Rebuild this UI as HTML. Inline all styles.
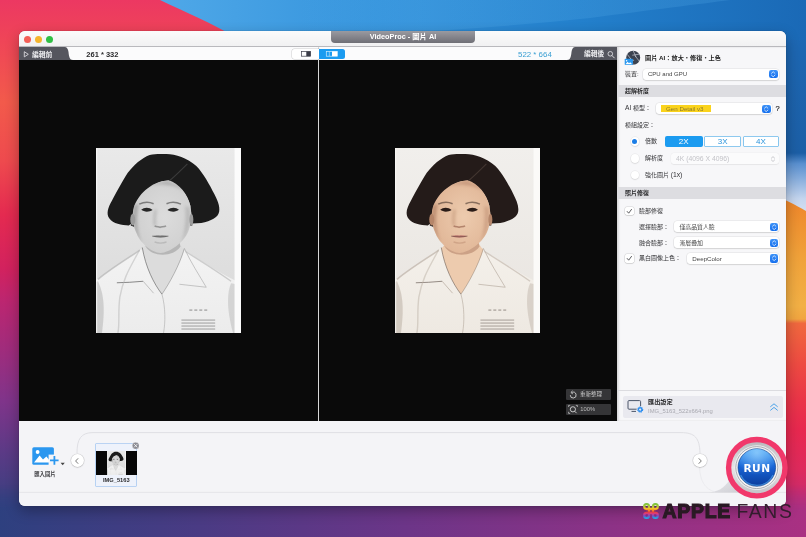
<!DOCTYPE html>
<html lang="zh-Hant">
<head>
<meta charset="utf-8">
<title>VideoProc - 圖片 AI</title>
<style>
*{box-sizing:border-box;margin:0;padding:0}
html,body{width:806px;height:537px;overflow:hidden;background:#222}
body{position:relative;font-family:"Liberation Sans","Noto Sans CJK TC",sans-serif;font-size:7px;color:#222;-webkit-font-smoothing:antialiased}
.abs{position:absolute}
#wall{position:absolute;left:0;top:0;width:806px;height:537px}
#win{will-change:transform;position:absolute;left:19px;top:31px;width:767px;height:475px;border-radius:6px;background:#ececee;box-shadow:0 5px 14px rgba(0,0,0,.3),0 0 1px rgba(0,0,0,.45);overflow:hidden}
#titlebar{position:absolute;left:0;top:0;width:767px;height:16px;background:linear-gradient(#fbfbfb,#f1f1f2);border-bottom:1px solid #b9b9bd}
.tl{position:absolute;top:4.6px;width:7px;height:7px;border-radius:50%}
#pill{position:absolute;left:312px;top:0;width:144px;height:12px;border-radius:0 0 4px 4px;background:linear-gradient(#9a9aa0,#6f6f76);color:#fff;font-weight:bold;font-size:7.3px;line-height:12px;text-align:center;letter-spacing:0}
#tabrow{position:absolute;left:0;top:16px;width:598px;height:13px;background:#fbfbfc}
.tab{position:absolute;top:0;height:13px;background:#55565e;color:#f1f1f3;font-weight:bold;font-size:7px;line-height:13px;white-space:nowrap}
#canvas{position:absolute;left:0;top:29px;width:598px;height:361px;background:#0a0a0a}
#divider{position:absolute;left:299px;top:16px;width:1px;height:374px;background:#d8d8d8}
#panel{position:absolute;left:598px;top:16px;width:169px;height:374px;background:#f7f7f9;box-shadow:inset 1.5px 0 2px rgba(0,0,0,.14)}
#bottom{position:absolute;left:0;top:390px;width:767px;height:85px;background:#f4f4f7}
.t{position:absolute;white-space:nowrap;line-height:1}

#ui{position:absolute;left:0;top:0;width:806px;height:537px;overflow:hidden;will-change:transform}
#ui .t{font-size:6px;color:#333336}
.b{font-weight:bold}
.dd{position:absolute;background:#fff;border-radius:3px;box-shadow:0 0 0 .5px rgba(0,0,0,.07),0 .5px 1.3px rgba(0,0,0,.2)}
.dd .lbl{position:absolute;left:5px;top:0;height:100%;display:flex;align-items:center;font-size:6.2px;color:#444;white-space:nowrap}
.st{position:absolute;right:1.3px;top:1.4px;bottom:1.4px;width:8.4px;border-radius:2.2px;background:linear-gradient(#3d92f7,#1670ee)}
.st svg{position:absolute;left:0;top:0;width:100%;height:100%}
.hdr{position:absolute;left:617px;width:169px;height:12px;background:#dddde1;font-size:6px;font-weight:bold;color:#2a2a2c;line-height:12px;padding-left:8px}
.radio{position:absolute;width:8.6px;height:8.6px;border-radius:50%;background:#fff;box-shadow:0 0 0 .5px rgba(0,0,0,.06),0 .5px 1.4px rgba(0,0,0,.16)}
.cb{position:absolute;width:8.6px;height:8.6px;border-radius:1.8px;background:#fff;box-shadow:0 0 0 .5px rgba(0,0,0,.14),0 .5px 1.2px rgba(0,0,0,.15)}
.cb svg{position:absolute;left:0;top:0;width:100%;height:100%}
.xb{position:absolute;top:136px;height:11px;border-radius:2px;font-size:8px;line-height:11px;text-align:center}
</style>
</head>
<body>
<svg id="wall" viewBox="0 0 806 537">
  <defs>
    <linearGradient id="gL" x1="0" y1="0" x2="0" y2="1">
      <stop offset="0" stop-color="#ec3862"/>
      <stop offset="0.07" stop-color="#ef4458"/>
      <stop offset="0.19" stop-color="#f25a4b"/>
      <stop offset="0.30" stop-color="#ee4a4e"/>
      <stop offset="0.40" stop-color="#e42a50"/>
      <stop offset="0.50" stop-color="#d2225e"/>
      <stop offset="0.56" stop-color="#bc2670"/>
      <stop offset="0.65" stop-color="#a02c7c"/>
      <stop offset="0.745" stop-color="#80348a"/>
      <stop offset="0.84" stop-color="#5c3a86"/>
      <stop offset="0.93" stop-color="#3c3f80"/>
      <stop offset="1" stop-color="#2a447e"/>
    </linearGradient>
    <linearGradient id="gT" x1="0" y1="0" x2="1" y2="0">
      <stop offset="0" stop-color="#ee3862"/>
      <stop offset="1" stop-color="#ee3862"/>
    </linearGradient>
    <linearGradient id="gB" gradientUnits="userSpaceOnUse" x1="160" y1="0" x2="806" y2="0">
      <stop offset="0" stop-color="#4fa8e8"/>
      <stop offset="0.35" stop-color="#3493dc"/>
      <stop offset="0.65" stop-color="#2380cc"/>
      <stop offset="1" stop-color="#1a69b6"/>
    </linearGradient>
    <linearGradient id="gR" gradientUnits="userSpaceOnUse" x1="0" y1="0" x2="0" y2="537">
      <stop offset="0" stop-color="#1e6dbb"/>
      <stop offset="0.1" stop-color="#1d66b1"/>
      <stop offset="0.285" stop-color="#1c5fa6"/>
      <stop offset="0.305" stop-color="#5a90d0"/>
      <stop offset="0.37" stop-color="#c4d5ee"/>
      <stop offset="0.4" stop-color="#d6e0f2"/>
    </linearGradient>
    <linearGradient id="gR2" gradientUnits="userSpaceOnUse" x1="0" y1="0" x2="0" y2="537">
      <stop offset="0.37" stop-color="#ee862a"/>
      <stop offset="0.48" stop-color="#f0a23a"/>
      <stop offset="0.57" stop-color="#f2b045"/>
      <stop offset="0.594" stop-color="#f1a540"/>
      <stop offset="0.602" stop-color="#f0683e"/>
      <stop offset="0.68" stop-color="#ee4a42"/>
      <stop offset="0.745" stop-color="#ea3548"/>
      <stop offset="0.8" stop-color="#e8284f"/>
      <stop offset="0.875" stop-color="#de2a5d"/>
      <stop offset="0.94" stop-color="#c42c73"/>
      <stop offset="1" stop-color="#a03488"/>
    </linearGradient>
    <linearGradient id="gBot" gradientUnits="userSpaceOnUse" x1="0" y1="560" x2="806" y2="470">
      <stop offset="0" stop-color="#2d407f"/>
      <stop offset="0.25" stop-color="#4a3b84"/>
      <stop offset="0.5" stop-color="#6c3588"/>
      <stop offset="0.75" stop-color="#8c3286"/>
      <stop offset="1" stop-color="#aa3082"/>
    </linearGradient>
    <linearGradient id="gBotFade" x1="0" y1="0" x2="0" y2="1">
      <stop offset="0" stop-color="#fff" stop-opacity="0"/>
      <stop offset="1" stop-color="#fff" stop-opacity="1"/>
    </linearGradient>
    <linearGradient id="gWave" gradientUnits="userSpaceOnUse" x1="300" y1="0" x2="420" y2="0"><stop offset="0" stop-color="#58aeea" stop-opacity="0"/><stop offset="1" stop-color="#58aeea" stop-opacity=".22"/></linearGradient>
    <mask id="mBot"><rect x="0" y="485" width="806" height="25" fill="url(#gBotFade)"/><rect x="0" y="509" width="806" height="30" fill="#fff"/></mask>
  </defs>
  <rect width="806" height="537" fill="url(#gL)"/>
  <rect x="770" y="0" width="36" height="537" fill="url(#gR)"/>
  <path d="M770 194 C782 198 796 205 806 211 L806 537 L770 537 Z" fill="url(#gR2)"/>
  <rect x="0" y="470" width="806" height="67" fill="url(#gBot)" mask="url(#mBot)"/>
  <path d="M160 0 C185 12 210 22 240 40 L806 40 L806 0 Z" fill="url(#gB)"/>
  <path d="M300 0 L300 40 C400 32 500 28 590 18 C650 10 700 4 730 0 Z" fill="url(#gWave)"/>
</svg>
<div id="win">
  <div id="titlebar">
    <div class="tl" style="left:4.6px;background:#f35e56"></div>
    <div class="tl" style="left:15.8px;background:#f5b52d"></div>
    <div class="tl" style="left:27px;background:#2fbf44"></div>
    <div id="pill">VideoProc - 圖片 AI</div>
  </div>
  <div id="tabrow"></div>
  <div id="canvas"></div>
  <div id="divider"></div>
  <div id="panel"></div>
  <div id="bottom"></div>
</div>

<!--PHOTODEFS--><svg width="0" height="0" style="position:absolute">
<symbol id="bwphoto" viewBox="0 0 146 186" preserveAspectRatio="none">
  <defs>
    <linearGradient id="bwphotobg" x1="0" y1="0" x2="0" y2="1"><stop offset="0" stop-color="#e9e9e9"/><stop offset="1" stop-color="#d8d8d8"/></linearGradient>
    <radialGradient id="bwphotoface" cx=".55" cy=".5" r=".7"><stop offset="0" stop-color="#dcdcdc"/><stop offset=".75" stop-color="#d0d0d0"/><stop offset="1" stop-color="#9c9c9c"/></radialGradient>
    <linearGradient id="bwphotoshirt" x1="0" y1="0" x2="0" y2="1"><stop offset="0" stop-color="#f3f3f3"/><stop offset="1" stop-color="#ececec"/></linearGradient>
    <filter id="bwphotobl" x="-5%" y="-5%" width="110%" height="110%" color-interpolation-filters="sRGB"><feGaussianBlur stdDeviation="0.7"/></filter>
    <filter id="bwphotobl2" x="-20%" y="-20%" width="140%" height="140%" color-interpolation-filters="sRGB"><feGaussianBlur stdDeviation="1.6"/></filter>
    <clipPath id="bwphotocp"><rect width="146" height="186"/></clipPath>
    <clipPath id="bwphotofc"><path d="M73 32.500 C84 36 92 46 95 58 C97 68 96 77 92.500 85 C88 95 74 105.500 65 105.500 C56 105.500 44 95 40.500 85 C37 77 36 68 38 60 C42 48 54 34 73 32.500 Z"/></clipPath>
  </defs>
  <g clip-path="url(#bwphotocp)">
  <rect width="146" height="186" fill="url(#bwphotobg)"/>
  <g filter="url(#bwphotobl)">
    <!-- shirt -->
    <path d="M-4 186 L-4 136 C6 128 22 118 44 102 L90 103 C110 116 128 128 150 138 L150 186 Z" fill="url(#bwphotoshirt)"/>
    <!-- shirt shading -->
    <path d="M2 134 C10 150 8 170 6 186 L-2 186 L-2 136 Z" fill="#b4b4b4" opacity=".55"/>
    <path d="M136 136 C130 150 134 172 138 186 L146 186 L146 138 Z" fill="#b4b4b4" opacity=".45"/>
    <path d="M44 103 C30 112 14 122 2 132" fill="none" stroke="#b4b4b4" stroke-width="1.6" opacity=".7"/>
    <path d="M90 104 C106 114 122 124 136 134" fill="none" stroke="#b4b4b4" stroke-width="1.4" opacity=".6"/>
    <!-- neck + chest skin -->
    <path d="M52 90 C51 96 49 99 46.600 101 C50 120 58 136 66.400 147 C74 136 84 118 89 102 C86 100 84 96 83 90 Z" fill="#dcdcdc"/>
    <path d="M50 99 C56 110 78 110 85 99 L83 90 L52 90 Z" fill="#9c9c9c" opacity=".6"/>
    <path d="M46.600 100 C50 120 58 136 66.400 147" fill="none" stroke="#5a5a5a" stroke-width="1" opacity=".6"/>
    <path d="M89 101 C84 118 74 136 66.400 147" fill="none" stroke="#5a5a5a" stroke-width=".8" opacity=".45"/>
    <!-- collar lines -->
    <path d="M21 135.500 L34 135 L47.500 134" fill="none" stroke="#5a5a5a" stroke-width="1" opacity=".7"/>
    <path d="M47.500 134 L58 146" fill="none" stroke="#b4b4b4" stroke-width="1" opacity=".8"/>
    <path d="M89 101 C96 116 104 128 111 140 L84 137" fill="none" stroke="#b4b4b4" stroke-width="1" opacity=".75"/>
    <path d="M66.400 147 C70 160 70 175 68 186" fill="none" stroke="#b4b4b4" stroke-width="1" opacity=".7"/>
    <path d="M44 102 C36 118 28 128 24 150 C22 165 24 178 22 186" fill="none" stroke="#b4b4b4" stroke-width="1.400" opacity=".5"/>
    <!-- badge -->
    <g stroke="#5a5a5a" stroke-width="1" opacity=".55">
      <path d="M86 173 H120 M86 176 H120 M86 179 H120 M86 182 H120"/>
      <path d="M94 163 H113" stroke-width="2" stroke-dasharray="3 2" opacity=".7"/>
    </g>
    <!-- hair -->
    <path d="M71 6 C80 6 92 10 101 18 C108 25 115 38 119 46 C122 52 125 58 124 64 C123 70 116 73 106 75.500 L97 76 L95 58 C92 46 84 38 73 33 C62 33 52 40 44 50 L38 62 L37 75 L33 78 C26 78 17 76 13.500 71 C10 66 12 60 16 53 C20 46 26 34 32 25 C38 17 46 10 54 7 C60 5.500 66 6 71 6 Z" fill="#1b1b1b"/>
    <path d="M37 60 L35 78 L40 80 Z" fill="#1b1b1b"/>
    <path d="M95 58 L97 78 L92 78 Z" fill="#1b1b1b"/>
    <!-- face -->
    <path d="M73 32.500 C84 36 92 46 95 58 C97 68 96 77 92.500 85 C88 95 74 105.500 65 105.500 C56 105.500 44 95 40.500 85 C37 77 36 68 38 60 C42 48 54 34 73 32.500 Z" fill="url(#bwphotoface)"/>
    <!-- parting highlight -->
    <path d="M74 33 C80 28 86 22 92 16" fill="none" stroke="#5a5a5a" stroke-width="1.200" opacity=".5"/>
    <!-- ears -->
    <ellipse cx="37" cy="72" rx="2.500" ry="6" fill="#9c9c9c"/>
    <ellipse cx="96" cy="72" rx="2" ry="6" fill="#9c9c9c"/>
    <!-- features -->
    <path d="M45.500 62.200 C48.500 59.300 53.500 59.300 57 62.400 C53.500 64.600 48.500 64.600 45.500 62.200 Z" fill="#262626"/>
    <path d="M72 62.400 C75.500 59.300 80.500 59.300 83.500 62.200 C80.500 64.600 75.500 64.600 72 62.400 Z" fill="#262626"/>
    <path d="M43.500 56.500 C48 54.200 54 54.200 58 56" fill="none" stroke="#262626" stroke-width="1.500" opacity=".5"/>
    <path d="M71 56 C75 54.200 81 54.200 85.500 56.500" fill="none" stroke="#262626" stroke-width="1.500" opacity=".5"/>
    <path d="M59 78.200 C61 79.600 63 79 64.500 79.800 C66 79 68.500 79.600 70.500 78.200" fill="none" stroke="#8a8a8a" stroke-width="1.500" opacity=".85"/>
    <path d="M56.500 88.500 C60 87.800 62.500 87.200 64.500 88 C66.500 87.200 69.500 87.800 73 88.500 C69 90.800 61 90.800 56.500 88.500 Z" fill="#8e8e8e"/>
    <path d="M56.500 88.600 C61 89.400 68 89.400 73 88.600" fill="none" stroke="#262626" stroke-width=".700" opacity=".5"/>
    <path d="M59 94.500 C62 96 68 96 71 94.500" fill="none" stroke="#9c9c9c" stroke-width="1.400" opacity=".45"/>
  </g>
  <g clip-path="url(#bwphotofc)">
    <g filter="url(#bwphotobl2)">
      <path d="M38 58 C36 72 38 84 46 96 C41 84 40 70 43 56 Z" fill="#9c9c9c" opacity=".8"/>
      <path d="M94 60 C96 72 94 84 86 96 C90 84 91 70 90 58 Z" fill="#9c9c9c" opacity=".45"/>
      <path d="M60 62 C59 68 58.500 74 59.500 78" fill="none" stroke="#9c9c9c" stroke-width="2.400" opacity=".55"/>
      <path d="M44 40 C54 36 76 34 90 44 L84 38 L72 33 L54 36 Z" fill="#9c9c9c" opacity=".6"/>
    </g>
  </g>
  <rect x="139.500" y="0" width="6.500" height="186" fill="#fbfbfb"/>
  <rect x="0" y="0" width="1.200" height="186" fill="#fbfbfb" opacity=".7"/>
  </g>
</symbol>
<symbol id="clphoto" viewBox="0 0 146 186" preserveAspectRatio="none">
  <defs>
    <linearGradient id="clphotobg" x1="0" y1="0" x2="0" y2="1"><stop offset="0" stop-color="#f1efec"/><stop offset="1" stop-color="#e8e4df"/></linearGradient>
    <radialGradient id="clphotoface" cx=".55" cy=".5" r=".7"><stop offset="0" stop-color="#edcbae"/><stop offset=".75" stop-color="#e1b798"/><stop offset="1" stop-color="#b5866a"/></radialGradient>
    <linearGradient id="clphotoshirt" x1="0" y1="0" x2="0" y2="1"><stop offset="0" stop-color="#f4f0ea"/><stop offset="1" stop-color="#eee9e2"/></linearGradient>
    <filter id="clphotobl" x="-5%" y="-5%" width="110%" height="110%" color-interpolation-filters="sRGB"><feGaussianBlur stdDeviation="0.7"/></filter>
    <filter id="clphotobl2" x="-20%" y="-20%" width="140%" height="140%" color-interpolation-filters="sRGB"><feGaussianBlur stdDeviation="1.6"/></filter>
    <clipPath id="clphotocp"><rect width="146" height="186"/></clipPath>
    <clipPath id="clphotofc"><path d="M73 32.500 C84 36 92 46 95 58 C97 68 96 77 92.500 85 C88 95 74 105.500 65 105.500 C56 105.500 44 95 40.500 85 C37 77 36 68 38 60 C42 48 54 34 73 32.500 Z"/></clipPath>
  </defs>
  <g clip-path="url(#clphotocp)">
  <rect width="146" height="186" fill="url(#clphotobg)"/>
  <g filter="url(#clphotobl)">
    <!-- shirt -->
    <path d="M-4 186 L-4 136 C6 128 22 118 44 102 L90 103 C110 116 128 128 150 138 L150 186 Z" fill="url(#clphotoshirt)"/>
    <!-- shirt shading -->
    <path d="M2 134 C10 150 8 170 6 186 L-2 186 L-2 136 Z" fill="#bcb1a6" opacity=".55"/>
    <path d="M136 136 C130 150 134 172 138 186 L146 186 L146 138 Z" fill="#bcb1a6" opacity=".45"/>
    <path d="M44 103 C30 112 14 122 2 132" fill="none" stroke="#bcb1a6" stroke-width="1.6" opacity=".7"/>
    <path d="M90 104 C106 114 122 124 136 134" fill="none" stroke="#bcb1a6" stroke-width="1.4" opacity=".6"/>
    <!-- neck + chest skin -->
    <path d="M52 90 C51 96 49 99 46.600 101 C50 120 58 136 66.400 147 C74 136 84 118 89 102 C86 100 84 96 83 90 Z" fill="#edcbae"/>
    <path d="M50 99 C56 110 78 110 85 99 L83 90 L52 90 Z" fill="#b5866a" opacity=".6"/>
    <path d="M46.600 100 C50 120 58 136 66.400 147" fill="none" stroke="#6a5f58" stroke-width="1" opacity=".6"/>
    <path d="M89 101 C84 118 74 136 66.400 147" fill="none" stroke="#6a5f58" stroke-width=".8" opacity=".45"/>
    <!-- collar lines -->
    <path d="M21 135.500 L34 135 L47.500 134" fill="none" stroke="#6a5f58" stroke-width="1" opacity=".7"/>
    <path d="M47.500 134 L58 146" fill="none" stroke="#bcb1a6" stroke-width="1" opacity=".8"/>
    <path d="M89 101 C96 116 104 128 111 140 L84 137" fill="none" stroke="#bcb1a6" stroke-width="1" opacity=".75"/>
    <path d="M66.400 147 C70 160 70 175 68 186" fill="none" stroke="#bcb1a6" stroke-width="1" opacity=".7"/>
    <path d="M44 102 C36 118 28 128 24 150 C22 165 24 178 22 186" fill="none" stroke="#bcb1a6" stroke-width="1.400" opacity=".5"/>
    <!-- badge -->
    <g stroke="#6a5f58" stroke-width="1" opacity=".55">
      <path d="M86 173 H120 M86 176 H120 M86 179 H120 M86 182 H120"/>
      <path d="M94 163 H113" stroke-width="2" stroke-dasharray="3 2" opacity=".7"/>
    </g>
    <!-- hair -->
    <path d="M71 6 C80 6 92 10 101 18 C108 25 115 38 119 46 C122 52 125 58 124 64 C123 70 116 73 106 75.500 L97 76 L95 58 C92 46 84 38 73 33 C62 33 52 40 44 50 L38 62 L37 75 L33 78 C26 78 17 76 13.500 71 C10 66 12 60 16 53 C20 46 26 34 32 25 C38 17 46 10 54 7 C60 5.500 66 6 71 6 Z" fill="#241b19"/>
    <path d="M37 60 L35 78 L40 80 Z" fill="#241b19"/>
    <path d="M95 58 L97 78 L92 78 Z" fill="#241b19"/>
    <!-- face -->
    <path d="M73 32.500 C84 36 92 46 95 58 C97 68 96 77 92.500 85 C88 95 74 105.500 65 105.500 C56 105.500 44 95 40.500 85 C37 77 36 68 38 60 C42 48 54 34 73 32.500 Z" fill="url(#clphotoface)"/>
    <!-- parting highlight -->
    <path d="M74 33 C80 28 86 22 92 16" fill="none" stroke="#5f5048" stroke-width="1.200" opacity=".5"/>
    <!-- ears -->
    <ellipse cx="37" cy="72" rx="2.500" ry="6" fill="#b5866a"/>
    <ellipse cx="96" cy="72" rx="2" ry="6" fill="#b5866a"/>
    <!-- features -->
    <path d="M45.500 62.200 C48.500 59.300 53.500 59.300 57 62.400 C53.500 64.600 48.500 64.600 45.500 62.200 Z" fill="#2a1c18"/>
    <path d="M72 62.400 C75.500 59.300 80.500 59.300 83.500 62.200 C80.500 64.600 75.500 64.600 72 62.400 Z" fill="#2a1c18"/>
    <path d="M43.500 56.500 C48 54.200 54 54.200 58 56" fill="none" stroke="#2a1c18" stroke-width="1.500" opacity=".5"/>
    <path d="M71 56 C75 54.200 81 54.200 85.500 56.500" fill="none" stroke="#2a1c18" stroke-width="1.500" opacity=".5"/>
    <path d="M59 78.200 C61 79.600 63 79 64.500 79.800 C66 79 68.500 79.600 70.500 78.200" fill="none" stroke="#a97862" stroke-width="1.500" opacity=".85"/>
    <path d="M56.500 88.500 C60 87.800 62.500 87.200 64.500 88 C66.500 87.200 69.500 87.800 73 88.500 C69 90.800 61 90.800 56.500 88.500 Z" fill="#bf7a72"/>
    <path d="M56.500 88.600 C61 89.400 68 89.400 73 88.600" fill="none" stroke="#2a1c18" stroke-width=".700" opacity=".5"/>
    <path d="M59 94.500 C62 96 68 96 71 94.500" fill="none" stroke="#b5866a" stroke-width="1.400" opacity=".45"/>
  </g>
  <g clip-path="url(#clphotofc)">
    <g filter="url(#clphotobl2)">
      <path d="M38 58 C36 72 38 84 46 96 C41 84 40 70 43 56 Z" fill="#b5866a" opacity=".8"/>
      <path d="M94 60 C96 72 94 84 86 96 C90 84 91 70 90 58 Z" fill="#b5866a" opacity=".45"/>
      <path d="M60 62 C59 68 58.500 74 59.500 78" fill="none" stroke="#b5866a" stroke-width="2.400" opacity=".55"/>
      <path d="M44 40 C54 36 76 34 90 44 L84 38 L72 33 L54 36 Z" fill="#b5866a" opacity=".6"/>
    </g>
  </g>
  <rect x="139.500" y="0" width="6.500" height="186" fill="#fbfaf8"/>
  <rect x="0" y="0" width="1.200" height="186" fill="#fbfaf8" opacity=".7"/>
  </g>
</symbol>
</svg>
<!--/PHOTODEFS-->
<div id="ui">
  <svg class="abs" style="left:96px;top:148px" width="145" height="185"><use href="#bwphoto" width="145" height="185"/></svg>
  <svg class="abs" style="left:395px;top:148px" width="145" height="185"><use href="#clphoto" width="145" height="185"/></svg>
  <!-- tab row -->
  <svg class="abs" style="left:19px;top:47px" width="598" height="13" viewBox="0 0 598 13">
    <path d="M0 0 L45.5 0 C48.2 0 49 2 49.5 5 C50 9.5 50.6 13 54 13 L0 13 Z" fill="#55565e"/>
    <path d="M598 0 L556.5 0 C553.8 0 553 2 552.5 5 C552 9.5 551.4 13 548 13 L598 13 Z" fill="#55565e"/>
    <path d="M5.3 4.7 L9.3 7.3 L5.3 9.9 Z" fill="none" stroke="#e6e6ea" stroke-width=".8" stroke-linejoin="round"/>
    <circle cx="591.3" cy="6.8" r="2.3" fill="none" stroke="#e6e6ea" stroke-width=".8"/>
    <path d="M593 8.6 L595.3 10.9" stroke="#e6e6ea" stroke-width=".9" stroke-linecap="round"/>
  </svg>
  <div class="t b" style="left:32px;top:51.6px;font-size:6.8px;color:#ededf0">編輯前</div>
  <div class="t b" style="left:86.3px;top:51.1px;font-size:7.5px;color:#2b2b2d">261 * 332</div>
  <div class="t" style="left:518px;top:50.8px;font-size:7.9px;color:#3b9fd3">522 * 664</div>
  <div class="t b" style="left:584px;top:51.4px;font-size:6.8px;color:#ededf0">編輯後</div>
  <!-- compare toggles -->
  <div class="abs" style="left:292px;top:49px;width:26.5px;height:9.5px;background:#fff;border-radius:2.5px 0 0 2.5px;box-shadow:0 0 0 .5px rgba(0,0,0,.18)"></div>
  <div class="abs" style="left:318.5px;top:49px;width:26.5px;height:9.5px;background:#1b9bf0;border-radius:0 2.5px 2.5px 0"></div>
  <svg class="abs" style="left:292px;top:49px" width="53" height="9.5" viewBox="0 0 53 9.5">
    <rect x="9.6" y="2.4" width="9" height="4.8" fill="#fff" stroke="#3b3c48" stroke-width=".7"/>
    <rect x="14.3" y="2.4" width="4.3" height="4.8" fill="#3b3c48"/>
    <rect x="34.3" y="2.4" width="11" height="4.8" fill="none" stroke="#cfeafc" stroke-width=".7"/>
    <rect x="40" y="2.4" width="5.3" height="4.8" fill="#fff"/>
    <path d="M37.3 2.4 V7.2" stroke="#cfeafc" stroke-width=".6"/>
  </svg>

  <!-- panel head -->
  <svg class="abs" style="left:624px;top:50px" width="17" height="17" viewBox="0 0 17 17">
    <circle cx="9.2" cy="7.7" r="7" fill="#3b4250"/>
    <g stroke="#c5c9d2" stroke-width=".7" fill="none">
      <path d="M9.2 .7 L12 7.2"/><path d="M15.3 4.2 L8.3 5.2"/><path d="M15.3 11.2 L10.9 5.6"/>
      <path d="M9.2 14.7 L6.4 8.2"/><path d="M3.1 11.2 L10.1 10.2"/><path d="M3.1 4.2 L7.5 9.8"/>
    </g>
    <rect x=".7" y="8.8" width="8.2" height="6.2" rx=".8" fill="#2a97ee"/>
    <circle cx="2.6" cy="10.7" r=".8" fill="#fff"/>
    <path d="M1.4 14.2 L3.6 11.8 L5 13.2 L6.2 12.2 L8.2 14.2 Z" fill="#fff"/>
  </svg>
  <div class="t b" style="left:645px;top:55.4px;font-size:6.2px;color:#222">圖片 AI：放大・修復・上色</div>
  <div class="t" style="left:625px;top:70.6px">裝置:</div>
  <div class="dd" style="left:643px;top:68.5px;width:136px;height:11.2px"><span class="lbl" style="font-size:6px">CPU and GPU</span><span class="st"><svg viewBox="0 0 8.4 8.4"><path d="M2.5 3.3 L4.2 1.7 L5.9 3.3 M2.5 5.2 L4.2 6.8 L5.9 5.2" fill="none" stroke="#fff" stroke-width=".75" stroke-linecap="round" stroke-linejoin="round"/></svg></span></div>

  <div class="hdr" style="top:85.3px">超解析度</div>
  <div class="t" style="left:625px;top:105.4px"><span style="font-size:6.6px">AI</span> 模型：</div>
  <div class="dd" style="left:656px;top:103.2px;width:116px;height:11px"><span class="abs" style="left:4.6px;top:2.2px;width:50px;height:6.6px;background:#fad31c"></span><span class="lbl" style="left:10px;color:#8d7a2a">Gen Detail v3</span><span class="st"><svg viewBox="0 0 8.4 8.4"><path d="M2.5 3.3 L4.2 1.7 L5.9 3.3 M2.5 5.2 L4.2 6.8 L5.9 5.2" fill="none" stroke="#fff" stroke-width=".75" stroke-linecap="round" stroke-linejoin="round"/></svg></span></div>
  <div class="t" style="left:775.6px;top:105px;font-size:7.5px;color:#2a2a2c;-webkit-text-stroke:.2px #2a2a2c">?</div>
  <div class="t" style="left:625px;top:121.5px">模組設定：</div>

  <div class="radio" style="left:630.7px;top:137.3px"><span class="abs" style="left:1.8px;top:1.8px;width:5px;height:5px;border-radius:50%;background:#1b7de6"></span></div>
  <div class="t" style="left:645px;top:138.3px">倍數</div>
  <div class="xb" style="left:665px;width:37.5px;background:#1b9bf0;color:#fff">2X</div>
  <div class="xb" style="left:704.3px;width:36.6px;background:#fff;color:#2c94dc;box-shadow:inset 0 0 0 .8px #6ab8ea">3X</div>
  <div class="xb" style="left:742.6px;width:36.8px;background:#fff;color:#2c94dc;box-shadow:inset 0 0 0 .8px #6ab8ea">4X</div>

  <div class="radio" style="left:630.7px;top:154.3px"></div>
  <div class="t" style="left:645px;top:155.3px">解析度</div>
  <div class="dd" style="left:671px;top:153.2px;width:108.4px;height:11px;background:#fbfbfc;box-shadow:0 0 0 .5px rgba(0,0,0,.03),0 .5px 1px rgba(0,0,0,.06)"><span class="lbl" style="color:#c3c3c8;font-size:6.8px">4K (4096 X 4096)</span><svg class="abs" style="right:2px;top:1.5px" width="8" height="8" viewBox="0 0 8.4 8.4"><path d="M2.5 3.3 L4.2 1.7 L5.9 3.3 M2.5 5.2 L4.2 6.8 L5.9 5.2" fill="none" stroke="#b9b9be" stroke-width=".8" stroke-linecap="round" stroke-linejoin="round"/></svg></div>

  <div class="radio" style="left:630.7px;top:170.8px"></div>
  <div class="t" style="left:645px;top:171.9px">強化圖片 <span style="font-size:6.8px">(1x)</span></div>

  <div class="hdr" style="top:187px">照片修復</div>
  <div class="cb" style="left:625.3px;top:206.9px"><svg viewBox="0 0 8.6 8.6"><path d="M2.2 4.5 L3.7 6.2 L6.5 2.4" fill="none" stroke="#4a4a4e" stroke-width=".9" stroke-linecap="round" stroke-linejoin="round"/></svg></div>
  <div class="t" style="left:639px;top:207.9px">臉部修復</div>
  <div class="t" style="left:639px;top:223.5px">選擇臉部：</div>
  <div class="dd" style="left:674.4px;top:221.3px;width:104.8px;height:11px"><span class="lbl" style="font-size:5.9px">僅高品質人臉</span><span class="st"><svg viewBox="0 0 8.4 8.4"><path d="M2.5 3.3 L4.2 1.7 L5.9 3.3 M2.5 5.2 L4.2 6.8 L5.9 5.2" fill="none" stroke="#fff" stroke-width=".75" stroke-linecap="round" stroke-linejoin="round"/></svg></span></div>
  <div class="t" style="left:639px;top:239.5px">融合臉部：</div>
  <div class="dd" style="left:674.4px;top:237.2px;width:104.8px;height:11px"><span class="lbl" style="font-size:5.9px">漸層疊加</span><span class="st"><svg viewBox="0 0 8.4 8.4"><path d="M2.5 3.3 L4.2 1.7 L5.9 3.3 M2.5 5.2 L4.2 6.8 L5.9 5.2" fill="none" stroke="#fff" stroke-width=".75" stroke-linecap="round" stroke-linejoin="round"/></svg></span></div>
  <div class="cb" style="left:625.3px;top:254.3px"><svg viewBox="0 0 8.6 8.6"><path d="M2.2 4.5 L3.7 6.2 L6.5 2.4" fill="none" stroke="#4a4a4e" stroke-width=".9" stroke-linecap="round" stroke-linejoin="round"/></svg></div>
  <div class="t" style="left:639px;top:255.2px">黑白圖像上色：</div>
  <div class="dd" style="left:687.3px;top:253px;width:91.9px;height:11px"><span class="lbl">DeepColor</span><span class="st"><svg viewBox="0 0 8.4 8.4"><path d="M2.5 3.3 L4.2 1.7 L5.9 3.3 M2.5 5.2 L4.2 6.8 L5.9 5.2" fill="none" stroke="#fff" stroke-width=".75" stroke-linecap="round" stroke-linejoin="round"/></svg></span></div>

  <!-- canvas tools -->
  <div class="abs" style="left:566.4px;top:389.2px;width:44.4px;height:10.6px;background:#353537;border-radius:1px"></div>
  <div class="abs" style="left:566.4px;top:403.7px;width:44.4px;height:11px;background:#353537;border-radius:1px"></div>
  <svg class="abs" style="left:566.5px;top:389.5px" width="44" height="25" viewBox="0 0 44 25">
    <path d="M3.3 5.2 A2.9 2.9 0 1 0 5.2 2.4" fill="none" stroke="#e8e8e8" stroke-width=".8"/>
    <path d="M5.6 .9 L3.9 2.5 L5.8 3.9" fill="none" stroke="#e8e8e8" stroke-width=".8"/>
    <circle cx="5.9" cy="19.3" r="2.6" fill="none" stroke="#e8e8e8" stroke-width=".8"/>
    <path d="M7.8 21.3 L9.6 23.2" stroke="#e8e8e8" stroke-width=".8"/>
    <path d="M1.6 17 V15.4 H3.2 M8.8 15.4 H10.4 V17 M1.6 21.8 V23.4 H3.2" fill="none" stroke="#e8e8e8" stroke-width=".6"/>
  </svg>
  <div class="t" style="left:580px;top:391.8px;font-size:5.5px;color:#cfcfcf">重新整理</div>
  <div class="t" style="left:580.3px;top:406.5px;font-size:5.8px;color:#bdbdbd">100%</div>

  <!-- export box -->
  <div class="abs" style="left:617px;top:390.4px;width:169px;height:1px;background:#dcdce0"></div>
  <div class="abs" style="left:622.5px;top:395.6px;width:160.5px;height:22.6px;background:#e9e9ef;border-radius:2px"></div>
  <svg class="abs" style="left:627px;top:399px" width="18" height="16" viewBox="0 0 18 16">
    <rect x="1" y="1.6" width="12.6" height="8.6" rx="1" fill="none" stroke="#4a5568" stroke-width="1"/>
    <path d="M4.5 12.4 H9" stroke="#4a5568" stroke-width="1"/>
    <circle cx="13.2" cy="10.6" r="3.6" fill="#e9e9ef"/>
    <circle cx="13.2" cy="10.6" r="2.3" fill="none" stroke="#2a8df0" stroke-width="1.5" stroke-dasharray="1.2 .6"/>
    <circle cx="13.2" cy="10.6" r="1.7" fill="none" stroke="#2a8df0" stroke-width="1.1"/>
  </svg>
  <div class="t b" style="left:648px;top:398.8px;font-size:6.2px;color:#2a2a2c">匯出設定</div>
  <div class="t" style="left:648px;top:408.8px;font-size:5.9px;color:#a9a9b0">IMG_5163_522x664.png</div>
  <svg class="abs" style="left:769px;top:402px" width="10" height="10" viewBox="0 0 10 10">
    <path d="M1.6 4.6 L5 1.8 L8.4 4.6 M1.6 8.2 L5 5.4 L8.4 8.2" fill="none" stroke="#3a9be8" stroke-width=".9" stroke-linecap="round" stroke-linejoin="round"/>
  </svg>

  <!-- bottom tray -->
  <svg class="abs" style="left:19px;top:421px" width="767" height="85" viewBox="0 0 767 85">
    <defs>
      <linearGradient id="sw" x1="0" y1="0" x2="1" y2="1"><stop offset="0" stop-color="#ebebee"/><stop offset="1" stop-color="#cbcbd0"/></linearGradient>
    </defs>
    <path d="M0 71.4 H767" fill="none" stroke="#e3e3e7" stroke-width=".9"/>
    <path d="M690 71.4 C702 70.5 707 65 713 55 L722 71.4 Z" fill="url(#sw)" opacity=".9"/>
    <path d="M58 32 C58 18 62 11.6 74 11.6 H662 C676 11.6 680.5 17 681 32" fill="none" stroke="#dcdce1" stroke-width=".9"/>
    <path d="M680.5 46 C681 60 686 68 696 71" fill="none" stroke="#e9e9ec" stroke-width=".8"/>
  </svg>
  <!-- import icon -->
  <svg class="abs" style="left:31px;top:446px" width="36" height="21" viewBox="0 0 36 21">
    <rect x="1.3" y="1.2" width="21.6" height="17.6" rx="1.6" fill="#2b97ef"/>
    <circle cx="6.6" cy="6" r="1.9" fill="#fff"/>
    <path d="M3 16.6 L8.6 9.6 L12 13.4 L15.4 10.4 L20.2 16.6 Z" fill="#fff"/>
    <rect x="17.6" y="8.6" width="10" height="10.6" fill="#f5f5f8"/>
    <path d="M23.4 10 V18.8 M19 14.4 H27.6" stroke="#2b97ef" stroke-width="1.8"/>
    <path d="M29.6 16.8 H33.8 L31.7 19.2 Z" fill="#444"/>
  </svg>
  <div class="t b" style="left:34.2px;top:471.8px;font-size:5.4px;color:#3a3a3e">匯入圖片</div>
  <div class="abs" style="left:70.5px;top:454.1px;width:13.2px;height:13.2px;border-radius:50%;background:#fff;box-shadow:0 0 0 .5px rgba(0,0,0,.12),0 .5px 1.4px rgba(0,0,0,.2)"></div>
  <div class="abs" style="left:693.4px;top:453.9px;width:13.2px;height:13.2px;border-radius:50%;background:#fff;box-shadow:0 0 0 .5px rgba(0,0,0,.12),0 .5px 1.4px rgba(0,0,0,.2)"></div>
  <svg class="abs" style="left:70px;top:453.7px" width="640" height="14" viewBox="0 0 640 14">
    <path d="M7.9 4.6 L5.6 7 L7.9 9.4" fill="none" stroke="#555" stroke-width=".8" stroke-linecap="round" stroke-linejoin="round"/>
    <path d="M629 4.6 L631.3 7 L629 9.4" fill="none" stroke="#555" stroke-width=".8" stroke-linecap="round" stroke-linejoin="round"/>
  </svg>
  <!-- thumbnail -->
  <div class="abs" style="left:95.3px;top:443.2px;width:42.2px;height:44.1px;border-radius:2px;background:#eef2fb;box-shadow:inset 0 0 0 .8px #a9c9f1"></div>
  <div class="abs" style="left:96.4px;top:450.7px;width:40.3px;height:24.7px;background:#070707"></div>
  <svg class="abs" style="left:107px;top:450.7px" width="19.4" height="24.7"><use href="#bwphoto" width="19.4" height="24.7"/></svg>
  <div class="t b" style="left:103px;top:478.3px;font-size:5.7px;color:#2a2a2c">IMG_5163</div>
  <svg class="abs" style="left:131.8px;top:441.7px" width="7.4" height="7.4" viewBox="0 0 7.4 7.4">
    <circle cx="3.7" cy="3.7" r="3.5" fill="#8b8b92" stroke="#f5f5f8" stroke-width=".4"/>
    <path d="M2.4 2.4 L5 5 M5 2.4 L2.4 5" stroke="#fff" stroke-width=".8" stroke-linecap="round"/>
  </svg>

  <!-- RUN -->
  <svg class="abs" style="left:722px;top:433px" width="70" height="70" viewBox="0 0 70 70">
    <defs>
      <linearGradient id="ring" x1="0" y1="0" x2="0" y2="1"><stop offset="0" stop-color="#b9b9bd"/><stop offset=".5" stop-color="#e6e6e8"/><stop offset="1" stop-color="#c4c4c8"/></linearGradient>
      <linearGradient id="ball" x1="0" y1="0" x2="0" y2="1"><stop offset="0" stop-color="#4aa6f6"/><stop offset=".45" stop-color="#1766d8"/><stop offset="1" stop-color="#0b3c9c"/></linearGradient>
      <radialGradient id="hl" cx=".5" cy=".1" r=".6"><stop offset="0" stop-color="#9ad4ff" stop-opacity=".75"/><stop offset="1" stop-color="#9ad4ff" stop-opacity="0"/></radialGradient>
      <clipPath id="winclip"><rect x="-10" y="-10" width="75.5" height="90"/></clipPath>
    </defs>
    <circle cx="34.8" cy="34.6" r="26" fill="url(#ring)"/>
    <circle cx="34.8" cy="34.6" r="22.4" fill="#ededf0"/>
    <circle cx="34.8" cy="34.6" r="21" fill="#f4f4f6" stroke="#8f9096" stroke-width=".7"/>
    <circle cx="34.8" cy="34.5" r="18.8" fill="url(#ball)" stroke="#0c3a86" stroke-width=".6"/>
    <circle cx="34.8" cy="34.5" r="18.4" fill="url(#hl)"/>
    <path d="M51.0 42.1 A17.9 17.9 0 0 1 18.6 42.1" fill="none" stroke="#58b0f4" stroke-width="1.3" opacity=".6"/>
    <circle cx="34.8" cy="34.7" r="28.2" fill="none" stroke="#f1386b" stroke-width="5.4"/>
    <text x="35" y="38.6" text-anchor="middle" font-family="'DejaVu Sans','Liberation Sans',sans-serif" font-weight="bold" font-size="10.6" letter-spacing=".5" fill="#fff">RUN</text>
  </svg>

  <!-- watermark -->
  <svg class="abs" style="left:643.3px;top:502.5px" width="16" height="16" viewBox="0 0 16 16">
    <defs><linearGradient id="rb" gradientUnits="userSpaceOnUse" x1="0" y1="0" x2="0" y2="16">
      <stop offset="0" stop-color="#6fbf3c"/><stop offset=".2" stop-color="#a6c93a"/><stop offset=".34" stop-color="#f5c12a"/><stop offset=".46" stop-color="#f58a24"/><stop offset=".56" stop-color="#e8403a"/><stop offset=".68" stop-color="#d83a8a"/><stop offset=".8" stop-color="#7a4ac0"/><stop offset=".92" stop-color="#2a9ce0"/><stop offset="1" stop-color="#2ab0e8"/>
    </linearGradient></defs>
    <path d="M6 6 V3.6 A2.4 2.4 0 1 0 3.6 6 H12.4 A2.4 2.4 0 1 0 10 3.6 V12.4 A2.4 2.4 0 1 0 12.4 10 H3.6 A2.4 2.4 0 1 0 6 12.4 Z" fill="none" stroke="url(#rb)" stroke-width="2.3"/>
  </svg>
  <div class="t" style="left:662.6px;top:501.5px;font-size:19.4px;font-weight:bold;color:#2a1a24;letter-spacing:.75px;-webkit-text-stroke:1.2px #2a1a24">APPLE</div>
  <div class="t" style="left:736.4px;top:501.5px;font-size:19.4px;color:#2e1c2a;letter-spacing:1.6px;opacity:.95">FANS</div>
</div>
</body>
</html>
